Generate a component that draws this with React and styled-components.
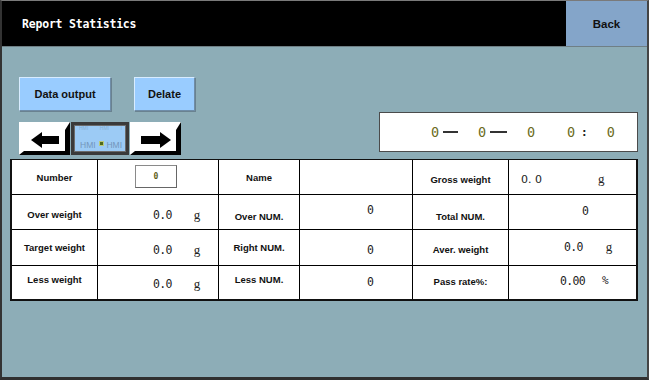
import styled, { createGlobalStyle } from 'styled-components';

const Global = createGlobalStyle`
  body {
    margin: 0;
    background: #fff;
  }
  * {
    box-sizing: border-box;
  }
`;

const Screen = styled.div`
  width: 649px;
  height: 380px;
  background: #8dadb7;
  border-top: 1px solid #7a7a7a;
  border-left: 2px solid #333;
  border-right: 2px solid #444;
  border-bottom: 3px solid #303030;
  display: flex;
  flex-direction: column;
  font-family: 'Liberation Sans', Arial, sans-serif;
`;

const Header = styled.div`
  display: flex;
  height: 46px;
  border-bottom: 1px solid #6f7f85;
`;

const Title = styled.div`
  flex: 1;
  background: #000;
  color: #fff;
  display: flex;
  align-items: center;
  padding-left: 20px;
  font-family: 'DejaVu Sans Mono', monospace;
  font-weight: bold;
  font-size: 11.5px;
  letter-spacing: -0.2px;
`;

const BackButton = styled.div`
  width: 81px;
  background: #84a5c9;
  display: flex;
  align-items: center;
  justify-content: center;
  font-weight: bold;
  font-size: 11.5px;
  color: #111;
`;

const Body = styled.div`
  padding: 30px 9px 0 8px;
`;

const Controls = styled.div`
  display: flex;
  align-items: flex-end;
`;

const LeftTools = styled.div`
  display: flex;
  flex-direction: column;
  gap: 11px;
  padding-left: 9px;
`;

const ButtonRow = styled.div`
  display: flex;
  gap: 23px;
`;

const Button = styled.div`
  width: ${({ $w }) => $w}px;
  height: 34px;
  background: #99ccff;
  border-top: 1px solid #d8ecff;
  border-left: 1px solid #d8ecff;
  border-right: 1px solid #6f8da8;
  border-bottom: 1px solid #6f8da8;
  box-shadow: 1px 1px 0 #6a8290;
  display: flex;
  align-items: center;
  justify-content: center;
  font-weight: bold;
  font-size: 11px;
  color: #111;
`;

const ArrowRow = styled.div`
  display: flex;
  gap: 1px;
  height: 33px;
`;

const ArrowButton = styled.div`
  width: 51px;
  height: 33px;
  background: #fff;
  border-style: solid;
  border-width: 8px 5px 4px 5px;
  border-color: #fff #000 #000 #fff;
  display: flex;
  align-items: center;
  justify-content: center;
  padding-bottom: 2px;
`;

const Hmi = styled.div`
  width: 58px;
  height: 33px;
  background: #9ccbf5;
  border: 3px solid #3a3a3a;
  box-shadow: inset 0 0 0 1px #6b6b6b;
  display: flex;
  flex-direction: column;
  justify-content: space-between;
  color: #7396bb;
`;

const HmiLine = styled.div`
  display: flex;
  justify-content: space-between;
  align-items: flex-end;
  padding: ${({ $top }) => ($top ? '1px 4px 0 5px' : '0 4px 3px 6px')};
`;

const HmiText = styled.span`
  font-size: ${({ $small }) => ($small ? 5 : 8.5)}px;
  line-height: 1;
  opacity: ${({ $small }) => ($small ? 0.55 : 1)};
`;

const HmiDot = styled.span`
  width: 5px;
  height: 5px;
  background: #4f6a1c;
  border: 1px solid #b9c97a;
  margin-bottom: 3px;
`;

const DateBox = styled.div`
  margin-left: auto;
  margin-bottom: 3px;
  width: 259px;
  height: 40px;
  background: #fff;
  border: 1px solid #4b4b4b;
  display: flex;
  align-items: center;
  padding-left: 51px;
  font-family: 'DejaVu Sans Mono', monospace;
  font-size: 13.5px;
`;

const Digit = styled.span`
  margin-left: ${({ $ml }) => $ml || 0}px;
  color: #6b6b1c;
  width: 8px;
`;

const Dash = styled.span`
  margin-left: ${({ $ml }) => $ml}px;
  width: ${({ $w }) => $w}px;
  height: 1.5px;
  background: #333;
`;

const Colon = styled.span`
  margin-left: ${({ $ml }) => $ml}px;
  color: #222;
  font-size: 11px;
  font-weight: bold;
`;

const Table = styled.div`
  margin-top: 4px;
  display: grid;
  grid-template-columns: 85px 120px 80px 112px 95px 127px;
  grid-template-rows: 34px 34px 35px 33px;
  gap: 1px;
  background: #000;
  border: 2px solid #111;
  border-top-width: 1.5px;
`;

const Cell = styled.div`
  background: #fff;
  display: flex;
  align-items: center;
  justify-content: ${({ $left }) => ($left !== undefined ? 'flex-start' : 'center')};
  padding-left: ${({ $left }) => $left || 0}px;
  padding-top: ${({ $dy }) => ($dy > 0 ? $dy * 2 : 0)}px;
  padding-bottom: ${({ $dy }) => ($dy < 0 ? -$dy * 2 : 0)}px;
`;

const Label = styled.span`
  font-weight: bold;
  font-size: 9.5px;
  color: #111;
`;

const Value = styled.span`
  font-family: 'DejaVu Sans Mono', monospace;
  font-size: 11.5px;
  letter-spacing: -0.7px;
  color: #222;
`;

const PlainValue = styled.span`
  font-family: 'DejaVu Sans', sans-serif;
  font-size: 11px;
  color: #222;
`;

const Unit = styled.span`
  margin-left: ${({ $ml }) => $ml}px;
  font-family: ${({ $mono }) => ($mono ? "'DejaVu Sans Mono', monospace" : "'Liberation Serif', serif")};
  font-size: ${({ $mono }) => ($mono ? 11 : 13)}px;
  color: #222;
`;

const NumberInput = styled.div`
  margin-left: 37px;
  margin-top: -1px;
  width: 42px;
  height: 23px;
  border: 1px solid #8a8a8a;
  border-right-color: #666;
  border-bottom-color: #666;
  display: flex;
  align-items: center;
  justify-content: center;
  font-family: 'DejaVu Sans Mono', monospace;
  font-weight: bold;
  font-size: 8px;
  color: #5e5e16;
`;

const LeftArrow = () => (
  <svg width="28" height="16" viewBox="0 0 28 16">
    <path d="M0 8 L11 0 L11 4 L28 4 L28 12 L11 12 L11 16 Z" fill="#000" />
  </svg>
);

const RightArrow = () => (
  <svg width="30" height="16" viewBox="0 0 30 16">
    <path d="M30 8 L19 0 L19 4 L0 4 L0 12 L19 12 L19 16 Z" fill="#000" />
  </svg>
);

const App = () => {
  return (
    <Screen>
      <Global />
      <Header>
        <Title>Report Statistics</Title>
        <BackButton>Back</BackButton>
      </Header>
      <Body>
        <Controls>
          <LeftTools>
            <ButtonRow>
              <Button $w={92}>Data output</Button>
              <Button $w={61}>Delate</Button>
            </ButtonRow>
            <ArrowRow>
              <ArrowButton>
                <LeftArrow />
              </ArrowButton>
              <Hmi>
                <HmiLine $top>
                  <HmiText $small>HMI</HmiText>
                  <HmiText $small>HMI</HmiText>
                  <HmiText $small>I</HmiText>
                </HmiLine>
                <HmiLine>
                  <HmiText>HMI</HmiText>
                  <HmiDot />
                  <HmiText>HMI</HmiText>
                </HmiLine>
              </Hmi>
              <ArrowButton>
                <RightArrow />
              </ArrowButton>
            </ArrowRow>
          </LeftTools>
          <DateBox>
            <Digit>0</Digit>
            <Dash $ml={4} $w={15} />
            <Digit $ml={20}>0</Digit>
            <Dash $ml={4} $w={17} />
            <Digit $ml={20}>0</Digit>
            <Digit $ml={32}>0</Digit>
            <Colon $ml={6}>:</Colon>
            <Digit $ml={19}>0</Digit>
          </DateBox>
        </Controls>
        <Table>
          <Cell><Label>Number</Label></Cell>
          <Cell $left={0}><NumberInput>0</NumberInput></Cell>
          <Cell><Label>Name</Label></Cell>
          <Cell />
          <Cell $dy={2}><Label>Gross weight</Label></Cell>
          <Cell $left={12} $dy={2}>
            <PlainValue>0. 0</PlainValue>
            <Unit $ml={56}>g</Unit>
          </Cell>

          <Cell $dy={2}><Label>Over weight</Label></Cell>
          <Cell $left={55} $dy={3}>
            <Value>0.0</Value>
            <Unit $ml={22}>g</Unit>
          </Cell>
          <Cell $dy={4}><Label>Over NUM.</Label></Cell>
          <Cell $left={67} $dy={-2}><Value>0</Value></Cell>
          <Cell $dy={4}><Label>Total NUM.</Label></Cell>
          <Cell $left={73} $dy={-1}><Value>0</Value></Cell>

          <Cell><Label>Target weight</Label></Cell>
          <Cell $left={55} $dy={2}>
            <Value>0.0</Value>
            <Unit $ml={22}>g</Unit>
          </Cell>
          <Cell><Label>Right NUM.</Label></Cell>
          <Cell $left={67} $dy={2}><Value>0</Value></Cell>
          <Cell $dy={2}><Label>Aver. weight</Label></Cell>
          <Cell $left={55} $dy={-1}>
            <Value>0.0</Value>
            <Unit $ml={23}>g</Unit>
          </Cell>

          <Cell $dy={-3}><Label>Less weight</Label></Cell>
          <Cell $left={55} $dy={1}>
            <Value>0.0</Value>
            <Unit $ml={22}>g</Unit>
          </Cell>
          <Cell $dy={-3}><Label>Less NUM.</Label></Cell>
          <Cell $left={67} $dy={-1}><Value>0</Value></Cell>
          <Cell $dy={-1}><Label>Pass rate%:</Label></Cell>
          <Cell $left={51} $dy={-2}>
            <Value>0.00</Value>
            <Unit $ml={17} $mono>%</Unit>
          </Cell>
        </Table>
      </Body>
    </Screen>
  );
};

export default App;
